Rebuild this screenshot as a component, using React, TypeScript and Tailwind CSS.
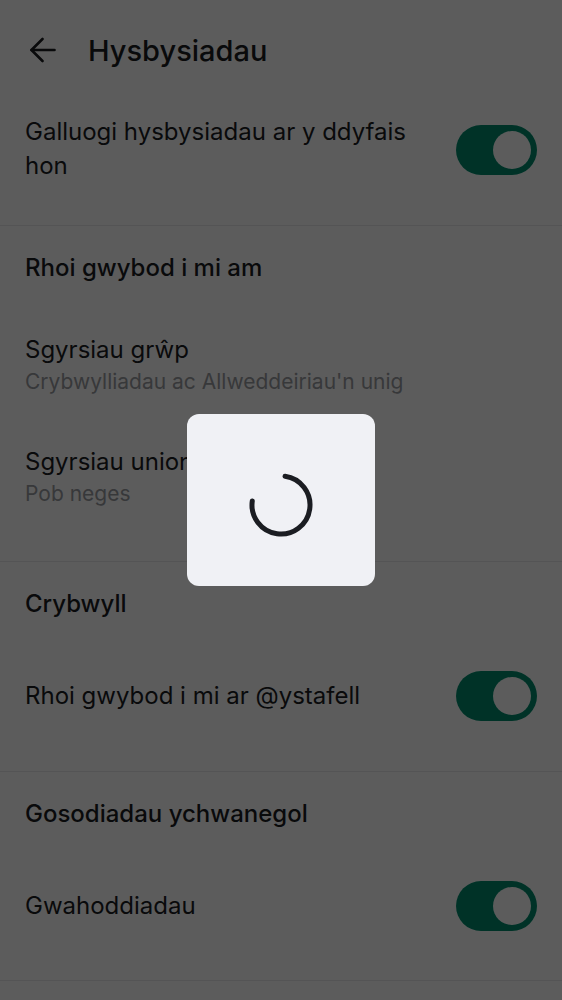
export default function App() {
    return (
        <div className="relative h-[1000px] w-full overflow-hidden bg-white font-['Inter',sans-serif] text-[#1b1c1f]">
            {/* Top bar */}
            <div className="flex h-[100px] items-center gap-[32px] px-[30px]">
                <svg width="26" height="26" viewBox="0 0 26 26" fill="none" stroke="#1b1c1f" strokeWidth="2.6" strokeLinecap="round" strokeLinejoin="round">
                    <path d="M1.5 13H24.5" />
                    <path d="M12.5 2L1.5 13L12.5 24" />
                </svg>
                <h1 className="text-[29px] font-medium leading-none">Hysbysiadau</h1>
            </div>

            {/* Enable on device */}
            <div className="flex h-[126px] items-start justify-between border-b border-[#e9e9ec] px-[25px] pt-[15px]">
                <span className="max-w-[400px] text-[24px] leading-[34px]">
                    Galluogi hysbysiadau ar y ddyfais hon
                </span>
                <div className="mt-[10px]">
                    <Toggle />
                </div>
            </div>

            {/* Notify me about */}
            <div className="border-b border-[#e9e9ec] pb-[27px]">
                <SectionTitle text="Rhoi gwybod i mi am" />
                <TwoLine title="Sgyrsiau grŵp" sub="Crybwylliadau ac Allweddeiriau'n unig" />
                <TwoLine title="Sgyrsiau uniongyrchol" sub="Pob neges" />
            </div>

            {/* Mentions */}
            <div className="border-b border-[#e9e9ec] pb-[25px]">
                <SectionTitle text="Crybwyll" />
                <ToggleRow label="Rhoi gwybod i mi ar @ystafell" />
            </div>

            {/* Additional settings */}
            <div className="border-b border-[#e9e9ec] pb-[24px]">
                <SectionTitle text="Gosodiadau ychwanegol" />
                <ToggleRow label="Gwahoddiadau" />
            </div>

            {/* Dim overlay + loading dialog */}
            <div className="absolute inset-0 flex items-center justify-center bg-black/[0.64]">
                <div className="flex h-[172px] w-[188px] items-center justify-center rounded-[12px] bg-[#f0f1f5]">
                    <svg width="66" height="66" viewBox="0 0 66 66" fill="none" className="mt-[10px]">
                        <path
                            d="M33 4 A29 29 0 1 1 4 33"
                            stroke="#1b1d22"
                            strokeWidth="5"
                            strokeLinecap="round"
                            transform="rotate(8 33 33)"
                        />
                    </svg>
                </div>
            </div>
        </div>
    );
}

function Toggle() {
    return (
        <div className="flex h-[50px] w-[81px] shrink-0 items-center justify-end rounded-full bg-[#008c6e] pr-[6px]">
            <div className="h-[38px] w-[38px] rounded-full bg-white" />
        </div>
    );
}

function SectionTitle({ text }: { text: string }) {
    return (
        <div className="flex h-[84px] items-center px-[25px] text-[24px] font-medium">
            {text}
        </div>
    );
}

function TwoLine({ title, sub }: { title: string; sub: string }) {
    return (
        <div className="flex h-[112px] flex-col justify-center px-[25px]">
            <span className="text-[24px] leading-[32px]">{title}</span>
            <span className="text-[21px] leading-[32px] text-[#9a9ca1]">{sub}</span>
        </div>
    );
}

function ToggleRow({ label }: { label: string }) {
    return (
        <div className="flex h-[100px] items-center justify-between px-[25px]">
            <span className="text-[24px]">{label}</span>
            <Toggle />
        </div>
    );
}
